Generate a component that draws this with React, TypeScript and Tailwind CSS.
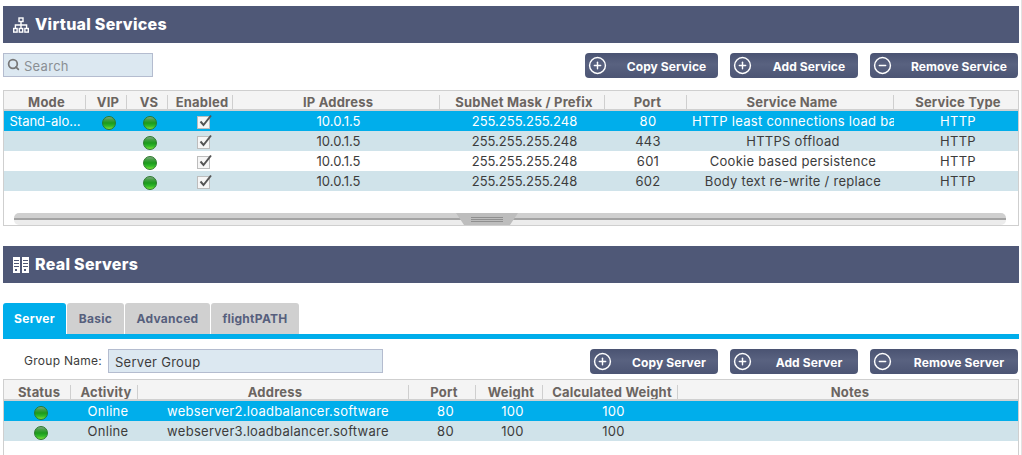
import { CirclePlus, CircleMinus, Search } from "lucide-react";

const font = "font-['Inter','Liberation_Sans',sans-serif]";

const StatusDot = () => (
  <span className="mt-[2px] block h-[14px] w-[14px] rounded-full border border-[#2a7a2a] bg-[linear-gradient(#7fa583_0%,#45a045_22%,#1c9a1c_50%,#2fb82a_75%,#7be03a_100%)]" />
);

const Tick = () => (
  <span className="relative mt-[2px] block h-[13px] w-[13px] border border-[#bdbdbd] bg-[#f6f6f6]">
    <svg viewBox="0 0 14 14" className="absolute left-[0px] top-[-3px] h-[14px] w-[14px] overflow-visible">
      <path d="M2.5 7.5l3 3.5L13 1.5" fill="none" stroke="#555" strokeWidth="2" />
    </svg>
  </span>
);

const SectionBar = ({ icon, title }: { icon: React.ReactNode; title: string }) => (
  <div className="mx-[3px] flex h-[37px] w-[1016px] items-center gap-[6px] bg-[#4f5877] pl-[10px] text-white">
    {icon}
    <span className="pb-[1px] text-[16px] font-extrabold">{title}</span>
  </div>
);

const ActionButton = ({ label, minus, width }: { label: string; minus?: boolean; width: string }) => (
  <button className={`flex h-[25px] items-center rounded-[4px] bg-[linear-gradient(#4a5372,#596280_45%,#4c5574)] pl-[3px] text-[12px] font-bold tracking-[0.1px] text-white ${width}`}>
    {minus ? <CircleMinus size={19} strokeWidth={1.8} /> : <CirclePlus size={19} strokeWidth={1.8} />}
    <span className="flex-1 pl-[8px] pt-[2px] text-center">{label}</span>
  </button>
);

const vsCols = "grid-cols-[82px_41px_41px_65px_207px_165px_82px_207px_1fr]";
const rsCols = "grid-cols-[67px_67px_271px_67px_67px_135px_1fr]";

const HeaderRow = ({ cols, labels, box }: { cols: string; labels: string[]; box: string }) => (
  <div className={`grid border-b-2 border-[#d0d0d0] bg-[#f4f4f4] text-[13px] font-bold leading-[14px] tracking-[0.2px] text-[#6b6561] ${box} ${cols}`}>
    {labels.map((l) => (
      <div key={l} className="flex items-center justify-center overflow-hidden whitespace-nowrap border-r border-[#cfcfcf] pl-[4px] last:border-r-0">
        {l}
      </div>
    ))}
  </div>
);

const rowTone = (i: number) =>
  i === 0 ? "bg-[#00aeeb] text-white" : i % 2 === 1 ? "bg-[#d0e3ea] text-[#3c3c3c]" : "bg-white text-[#3c3c3c]";

const services = [
  { mode: "Stand-alo...", vip: true, port: "80", name: "HTTP least connections load balancer" },
  { mode: "", vip: false, port: "443", name: "HTTPS offload" },
  { mode: "", vip: false, port: "601", name: "Cookie based persistence" },
  { mode: "", vip: false, port: "602", name: "Body text re-write / replace" },
];

const servers = ["webserver2.loadbalancer.software", "webserver3.loadbalancer.software"];

const Cell = ({ children, pad = "pl-[4px]" }: { children?: React.ReactNode; pad?: string }) => (
  <div className={`flex items-center justify-center overflow-hidden whitespace-nowrap pt-[1px] ${pad}`}>{children}</div>
);

export default function App() {
  return (
    <div className={`relative h-[455px] w-[1022px] overflow-hidden bg-white pt-[6px] tracking-[0.28px] ${font}`}>
      {/* page scrollbar edge */}
      <div className="absolute inset-y-0 right-0 w-[1px] bg-[#e2e2e2]" />

      <SectionBar
        title="Virtual Services"
        icon={
          <svg viewBox="0 0 16 16" className="h-[16px] w-[16px]" fill="none" stroke="white" strokeWidth="1.4">
            <rect x="6" y="1" width="4" height="3.5" />
            <rect x="0.7" y="11.5" width="3.4" height="3.6" />
            <rect x="6.3" y="11.5" width="3.4" height="3.6" />
            <rect x="11.9" y="11.5" width="3.4" height="3.6" />
            <path d="M8 4.5v7M2.4 11.5V8h11.2v3.5" />
          </svg>
        }
      />

      <div className="mx-[3px] mt-[10px] flex h-[25px] w-[1015px] items-start justify-between">
        <div className="flex h-[24px] w-[150px] items-center gap-[4px] border border-[#b4bccf] bg-[#dce8f1] pl-[3px] text-[13px] text-[#8a8f94]">
          <Search size={13} strokeWidth={3.2} className="mb-[2px] text-[#777]" />
          <span className="pt-[4px]">Search</span>
        </div>
        <div className="flex gap-[12px]">
          <ActionButton label="Copy Service" width="w-[133px]" />
          <ActionButton label="Add Service" width="w-[128px]" />
          <ActionButton label="Remove Service" minus width="w-[148px]" />
        </div>
      </div>

      <div className="mx-[3px] mt-[12px] h-[136px] w-[1016px] border border-[#cfcfcf] text-[13px]">
        <HeaderRow
          cols={vsCols}
          box="h-[20px] pt-[4px]"
          labels={["Mode", "VIP", "VS", "Enabled", "IP Address", "SubNet Mask / Prefix", "Port", "Service Name", "Service Type"]}
        />
        {services.map((s, i) => (
          <div key={s.port} className={`grid h-[20px] ${vsCols} ${rowTone(i)}`}>
            <Cell pad="tracking-normal">{s.mode}</Cell>
            <Cell>{s.vip && <StatusDot />}</Cell>
            <Cell>
              <StatusDot />
            </Cell>
            <Cell pad="pl-[6px]">
              <Tick />
            </Cell>
            <Cell pad="pl-[4px] tracking-normal">10.0.1.5</Cell>
            <Cell pad="pl-[4px] tracking-normal">255.255.255.248</Cell>
            <Cell>{s.port}</Cell>
            <div className="overflow-hidden whitespace-nowrap pl-[5px] pt-[1px] text-center leading-[19px]">{s.name}</div>
            <Cell>HTTP</Cell>
          </div>
        ))}
        <div className="relative ml-[10px] mr-[12px] mt-[22px] h-[12px] rounded-[5px] bg-[linear-gradient(#cfcfcf_0_50%,#ececec_50%)]">
          <div className="absolute inset-x-0 top-[5px] h-[2px] bg-[#a3a3a3]" />
          <div className="absolute left-[442px] top-0 flex h-[12px] w-[62px] flex-col items-center justify-center gap-[1px] bg-[#bdbdbd] [clip-path:polygon(0_0,100%_0,87%_100%,13%_100%)]">
            <span className="h-[1px] w-[32px] bg-[#8f8f8f]" />
            <span className="h-[1px] w-[32px] bg-[#8f8f8f]" />
            <span className="h-[1px] w-[32px] bg-[#8f8f8f]" />
          </div>
        </div>
      </div>

      <div className="mt-[20px]">
        <SectionBar
          title="Real Servers"
          icon={
            <svg viewBox="0 0 16 16" className="h-[16px] w-[16px]" fill="white">
              <path d="M0 0h7v16H0zM9 0h7v16H9z" />
              <path d="M1 3h5v1H1zM1 6h5v1H1zM1 9h5v1H1zM10 3h5v1h-5zM10 6h5v1h-5zM10 9h5v1h-5zM2 12h2v2H2zM11 12h2v2h-2z" fill="#4f5877" />
            </svg>
          }
        />
      </div>

      <div className="mx-[3px] mt-[20px] flex h-[31px] gap-[1px] text-[12px] font-bold">
        <div className="flex w-[63px] items-center justify-center rounded-t-[3px] bg-[#00aeeb] text-white">Server</div>
        <div className="flex w-[57px] items-center justify-center rounded-t-[3px] bg-[#d0d0d0] text-[#565f7d]">Basic</div>
        <div className="flex w-[85px] items-center justify-center rounded-t-[3px] bg-[#d0d0d0] text-[#565f7d]">Advanced</div>
        <div className="flex w-[88px] items-center justify-center rounded-t-[3px] bg-[#d0d0d0] text-[#565f7d]">flightPATH</div>
      </div>
      <div className="mx-[3px] h-[5px] w-[1016px] bg-[#00aeeb]" />

      <div className="mx-[3px] mt-[10px] flex h-[25px] w-[1015px] items-start justify-between">
        <div className="flex items-center text-[12px] text-[#3c3c3c]">
          <span className="ml-[21px] w-[84px]">Group Name:</span>
          <div className="flex h-[24px] w-[275px] items-center border border-[#b4bccf] bg-[#dce8f1] pl-[6px] text-[13px] text-[#3c3c3c]">
            <span className="pt-[4px]">Server Group</span>
          </div>
        </div>
        <div className="flex gap-[12px]">
          <ActionButton label="Copy Server" width="w-[128px]" />
          <ActionButton label="Add Server" width="w-[128px]" />
          <ActionButton label="Remove Server" minus width="w-[148px]" />
        </div>
      </div>

      <div className="mx-[3px] mt-[5px] h-[90px] w-[1016px] border-x border-t border-[#cfcfcf] text-[13px]">
        <HeaderRow
          cols={rsCols}
          box="h-[21px] pt-[5px]"
          labels={["Status", "Activity", "Address", "Port", "Weight", "Calculated Weight", "Notes"]}
        />
        {servers.map((s, i) => (
          <div key={s} className={`grid h-[20px] ${rsCols} ${i === 0 ? "bg-[#00aeeb] text-white" : "bg-[#d0e3ea] text-[#3c3c3c]"}`}>
            <Cell pad="pl-[7px]">
              <StatusDot />
            </Cell>
            <Cell pad="pl-[7px]">Online</Cell>
            <Cell pad="pl-[9px]">{s}</Cell>
            <Cell pad="pl-[6px]">80</Cell>
            <Cell pad="pl-[6px]">100</Cell>
            <Cell pad="pl-[6px]">100</Cell>
            <Cell />
          </div>
        ))}
      </div>
    </div>
  );
}
